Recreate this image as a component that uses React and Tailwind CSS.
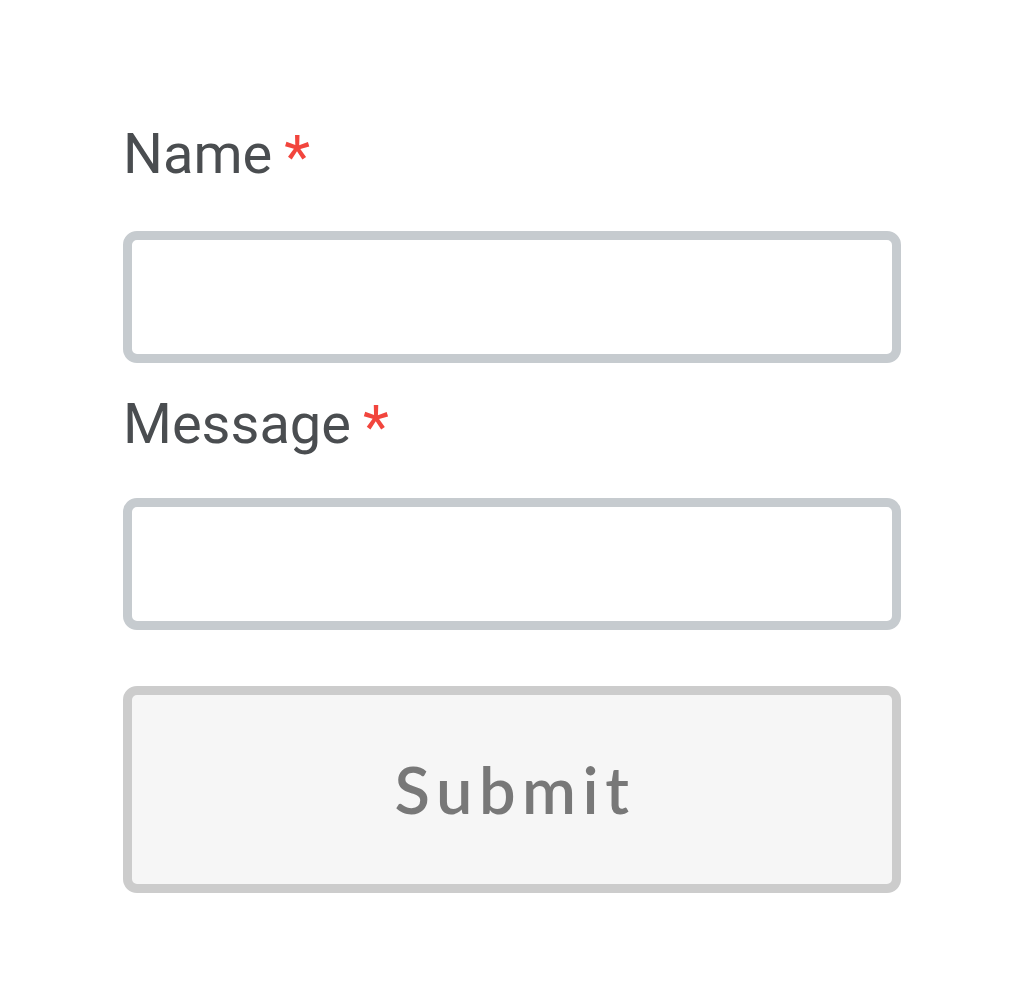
export default function App() {
  return (
    <div className="min-h-screen bg-white">
      <form className="ml-[123px] w-[778px] pt-[123px]" onSubmit={(e) => e.preventDefault()}>
        <label className="block h-[62px] font-['Roboto',sans-serif] text-[56px] leading-[62px] text-[#4a4d50]">
          Name<span className="ml-[12px] align-[-4px] text-[60px] text-[#f2453d]">*</span>
        </label>
        <input
          type="text"
          className="mt-[46px] block h-[132px] w-full rounded-[14px] border-[9px] border-[#c6cbcf] bg-white outline-none"
        />
        <label className="mt-[30px] block h-[62px] font-['Roboto',sans-serif] text-[56px] leading-[62px] text-[#4a4d50]">
          Message<span className="ml-[12px] align-[-4px] text-[60px] text-[#f2453d]">*</span>
        </label>
        <input
          type="text"
          className="mt-[43px] block h-[132px] w-full rounded-[14px] border-[9px] border-[#c6cbcf] bg-white outline-none"
        />
        <button
          type="submit"
          className="mt-[56px] block h-[207px] w-full rounded-[14px] border-[9px] border-[#cccccc] bg-[#f6f6f6] pl-[6px] font-['Lato',sans-serif] text-[65px] font-semibold tracking-[0.1em] text-[#787878]"
        >
          Submit
        </button>
      </form>
    </div>
  )
}
